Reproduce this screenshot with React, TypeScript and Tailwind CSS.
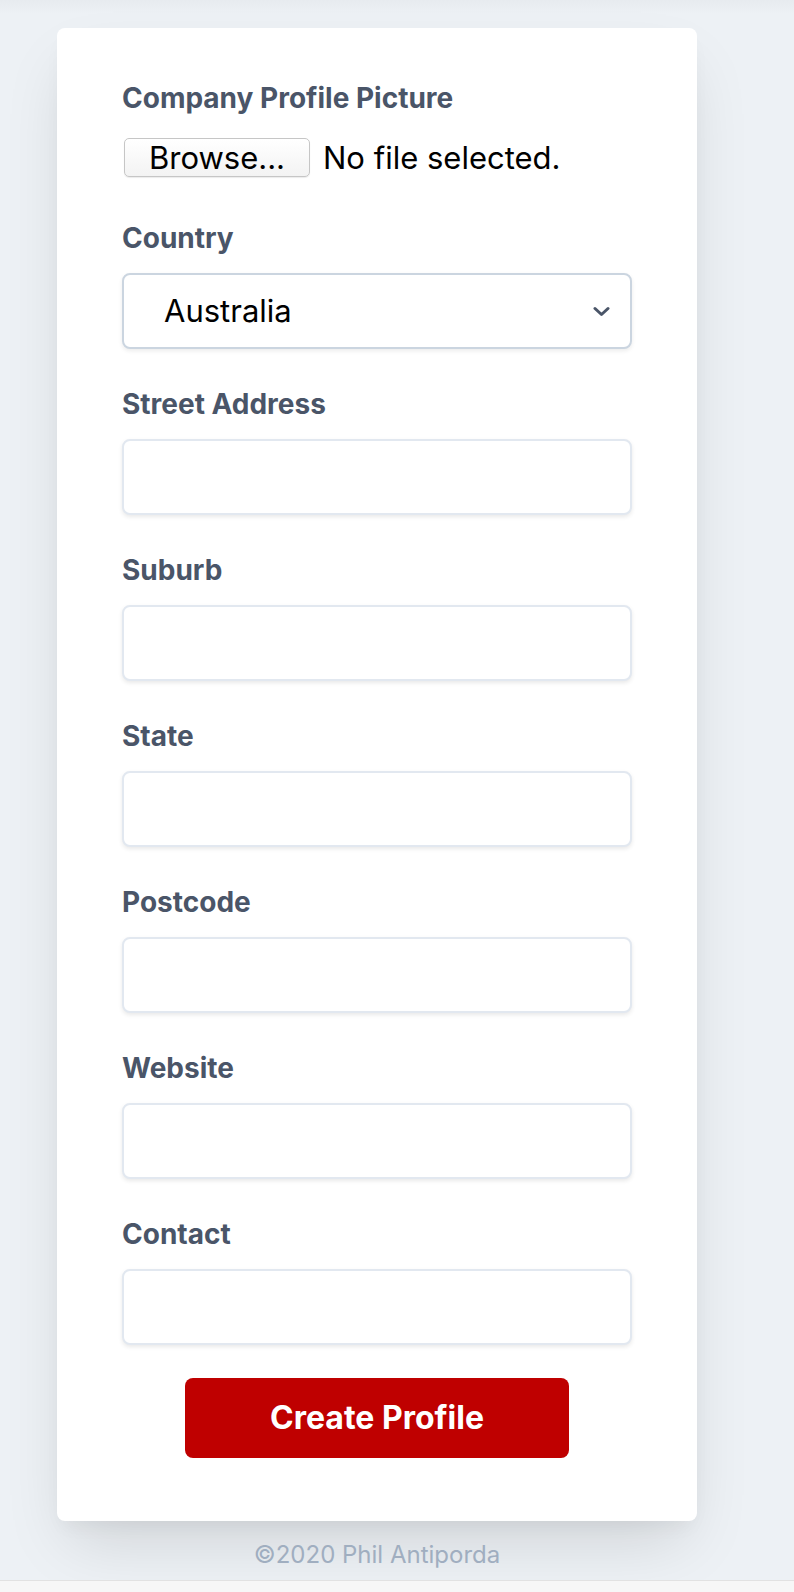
const fields = ['Street Address', 'Suburb', 'State', 'Postcode', 'Website', 'Contact']

function Label({ children }: { children: string }) {
  return <label className="mb-[15px] block h-[40px] text-[28px] font-bold leading-[40px] text-[#4a5568]">{children}</label>
}

export default function App() {
  return (
    <div className="flex h-[1592px] flex-col bg-[#edf1f5] font-['Inter',sans-serif]">
      <div className="flex-1 bg-gradient-to-b from-[#e7ebef] to-[#edf1f5] bg-[length:100%_14px] bg-no-repeat pt-[28px]">
        <div className="ml-[57px] w-[640px] rounded-[8px] bg-white px-[65px] pt-[50px] pb-[63px] shadow-[0_30px_60px_-12px_rgba(0,0,0,0.13),0_10px_20px_-6px_rgba(0,0,0,0.05)]">
          <label className="mb-[20px] block h-[40px] text-[28px] font-bold leading-[40px] text-[#4a5568]">
            Company Profile Picture
          </label>
          <div className="mb-[40px] flex h-[40px] items-start">
            <button className="ml-[2px] h-[39px] w-[186px] rounded-[5px] border border-[#c6c6c6] bg-gradient-to-b from-white to-[#f3f3f3] text-[31px] leading-[37px] text-black shadow-[0_1px_1px_rgba(0,0,0,0.08)]">
              Browse...
            </button>
            <span className="ml-[13px] text-[31px] leading-[39px] text-black">No file selected.</span>
          </div>

          <Label>Country</Label>
          <div className="mb-[35px] flex h-[76px] items-center justify-between rounded-[8px] border-2 border-[#cbd5e0] bg-white pl-[40px] pr-[20px] shadow-[0_2px_4px_rgba(0,0,0,0.08)]">
            <span className="text-[31px] text-black">Australia</span>
            <svg width="17" height="11" viewBox="0 0 17 11" fill="none">
              <path d="M2 2.5l6.5 6 6.5-6" stroke="#4a5568" strokeWidth="3" strokeLinecap="round" strokeLinejoin="round" />
            </svg>
          </div>

          {fields.map((name, i) => (
            <div key={name} className={i < fields.length - 1 ? 'mb-[35px]' : ''}>
              <Label>{name}</Label>
              <input
                type="text"
                className="block h-[76px] w-full rounded-[8px] border-2 border-[#e2e8f0] bg-white px-6 text-[31px] shadow-[0_2px_4px_rgba(0,0,0,0.09)] outline-none"
              />
            </div>
          ))}

          <button className="mx-auto mt-[33px] block h-[80px] w-[384px] rounded-[8px] bg-[#bf0000] text-[32px] font-bold text-white">
            Create Profile
          </button>
        </div>
        <p className="mt-[18px] ml-[57px] w-[640px] text-center text-[24px] leading-[32px] text-[#a0aec0]">©2020 Phil Antiporda</p>
      </div>
      <div className="h-[12px] border-t border-[#e2e2e2] bg-[#f7f7f7]" />
    </div>
  )
}
